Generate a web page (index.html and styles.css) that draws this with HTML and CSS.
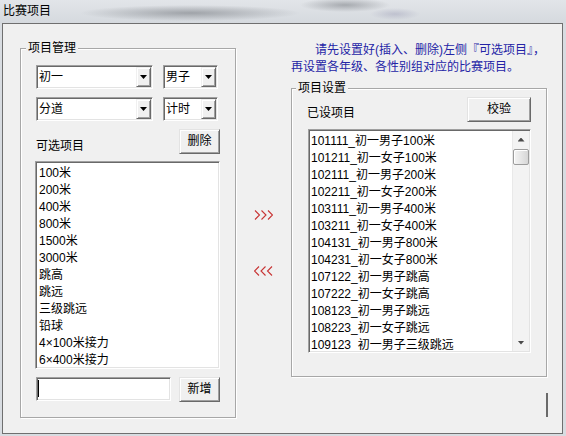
FILE: index.html
```html
<!DOCTYPE html>
<html>
<head>
<meta charset="utf-8">
<title>比赛项目</title>
<link rel="stylesheet" href="styles.css">
</head>
<body>
<div class="titlebar">比赛项目</div>
<div class="client">
  <div class="col-left">
    <div class="group group-left">
      <div class="group-title">项目管理</div>
      <div class="row row-combo row1">
        <div class="combo combo-wide"><span class="combo-text">初一</span><span class="combo-btn"><i class="tri"></i></span></div>
        <div class="combo combo-narrow"><span class="combo-text">男子</span><span class="combo-btn"><i class="tri"></i></span></div>
      </div>
      <div class="row row-combo row2">
        <div class="combo combo-wide"><span class="combo-text">分道</span><span class="combo-btn"><i class="tri"></i></span></div>
        <div class="combo combo-narrow"><span class="combo-text">计时</span><span class="combo-btn"><i class="tri"></i></span></div>
      </div>
      <div class="row row-label">
        <span class="label">可选项目</span>
        <button class="btn btn-small">删除</button>
      </div>
      <div class="listbox listbox-left">
        <div class="item">100米</div>
        <div class="item">200米</div>
        <div class="item">400米</div>
        <div class="item">800米</div>
        <div class="item">1500米</div>
        <div class="item">3000米</div>
        <div class="item">跳高</div>
        <div class="item">跳远</div>
        <div class="item">三级跳远</div>
        <div class="item">铅球</div>
        <div class="item">4×100米接力</div>
        <div class="item">6×400米接力</div>
      </div>
      <div class="row row-input">
        <div class="textbox"><span class="caret"></span></div>
        <button class="btn btn-small">新增</button>
      </div>
    </div>
  </div>

  <div class="col-mid">
    <svg class="arrows arrows-right" width="19" height="10" viewBox="0 0 19 10">
      <polyline points="1,0.5 5.5,5 1,9.5"/>
      <polyline points="7.5,0.5 12,5 7.5,9.5"/>
      <polyline points="14,0.5 18.5,5 14,9.5"/>
    </svg>
    <svg class="arrows arrows-left" width="19" height="10" viewBox="0 0 19 10">
      <polyline points="5,0.5 0.5,5 5,9.5"/>
      <polyline points="11.5,0.5 7,5 11.5,9.5"/>
      <polyline points="18,0.5 13.5,5 18,9.5"/>
    </svg>
  </div>

  <div class="col-right">
    <div class="note">
      <div class="note-line note-first">请先设置好(插入、删除)左侧『可选项目』，</div>
      <div class="note-line">再设置各年级、各性别组对应的比赛项目。</div>
    </div>
    <div class="group group-right">
      <div class="group-title group-title-right">项目设置</div>
      <div class="row row-label row-label-right">
        <span class="label label-right">已设项目</span>
        <button class="btn btn-wide">校验</button>
      </div>
      <div class="listbox listbox-right">
        <div class="items">
          <div class="item">101111_初一男子100米</div>
          <div class="item">101211_初一女子100米</div>
          <div class="item">102111_初一男子200米</div>
          <div class="item">102211_初一女子200米</div>
          <div class="item">103111_初一男子400米</div>
          <div class="item">103211_初一女子400米</div>
          <div class="item">104131_初一男子800米</div>
          <div class="item">104231_初一女子800米</div>
          <div class="item">107122_初一男子跳高</div>
          <div class="item">107222_初一女子跳高</div>
          <div class="item">108123_初一男子跳远</div>
          <div class="item">108223_初一女子跳远</div>
          <div class="item">109123_初一男子三级跳远</div>
        </div>
        <div class="scrollbar">
          <div class="sb-btn"><i class="sb-tri sb-up"></i></div>
          <div class="sb-thumb"></div>
          <div class="sb-track"></div>
          <div class="sb-btn"><i class="sb-tri sb-down"></i></div>
        </div>
      </div>
    </div>
    <div class="grip"></div>
  </div>
</div>
</body>
</html>
```

FILE: styles.css
```css
* {
  box-sizing: border-box;
}

html, body {
  margin: 0;
  padding: 0;
}

body {
  width: 566px;
  height: 436px;
  overflow: hidden;
  background: #d8dce1;
  font-family: "Liberation Sans", "Noto Sans CJK SC", sans-serif;
  font-size: 12px;
  color: #000;
}

.titlebar {
  height: 23px;
  line-height: 22px;
  padding-left: 3px;
  background:
    radial-gradient(ellipse 110px 8px at 190px 13px, rgba(110, 114, 120, 0.55), rgba(110, 114, 120, 0)),
    radial-gradient(ellipse 45px 7px at 345px 5px, rgba(110, 114, 120, 0.5), rgba(110, 114, 120, 0)),
    radial-gradient(ellipse 25px 6px at 395px 14px, rgba(140, 140, 170, 0.35), rgba(140, 140, 170, 0)),
    linear-gradient(#e2e5e9, #d5d9de);
}

.client {
  margin-left: 2px;
  width: 561px;
  height: 411px;
  border: 1px solid #6f6f6f;
  background: #f0f0f0;
  display: flex;
}

/* ---------- group boxes ---------- */
.group {
  border: 1px solid #a7a7a7;
  box-shadow: inset 1px 1px 0 #fff, 1px 1px 0 #fff;
}

.group-title {
  width: max-content;
  height: 14px;
  line-height: 14px;
  margin: -8px 0 0 5px;
  padding: 0 2px;
  background: #f0f0f0;
}

.group-title-right {
  margin-left: 4px;
}

.col-left {
  margin-left: 17px;
  margin-top: 24px;
}

.group-left {
  width: 216px;
  height: 370px;
}

.row {
  display: flex;
}

.row-combo {
  padding-left: 15px;
  gap: 10px;
  height: 24px;
}

.row1 {
  margin-top: 10px;
}

.row2 {
  margin-top: 8px;
}

/* ---------- combo boxes ---------- */
.combo {
  height: 24px;
  display: flex;
  padding: 1px;
  background: #fff;
  border: 1px solid;
  border-color: #a0a0a0 #fff #fff #a0a0a0;
  box-shadow: inset 1px 1px 0 #696969, inset -1px -1px 0 #e3e3e3;
}

.combo-wide {
  width: 117px;
}

.combo-narrow {
  width: 55px;
}

.combo-text {
  flex: 1;
  padding-left: 1px;
  line-height: 20px;
}

.combo-btn {
  width: 15px;
  display: flex;
  align-items: center;
  justify-content: center;
  background: #f0f0f0;
  border: 1px solid;
  border-color: #f0f0f0 #696969 #696969 #f0f0f0;
  box-shadow: inset 1px 1px 0 #fff, inset -1px -1px 0 #a0a0a0;
}

.tri {
  display: block;
  width: 7px;
  height: 4px;
  background: #000;
  clip-path: polygon(0 0, 100% 0, 50% 100%);
}

/* ---------- buttons ---------- */
.btn {
  font: inherit;
  color: #000;
  height: 25px;
  padding: 0;
  background: #f0f0f0;
  border: 1px solid;
  border-color: #e3e3e3 #696969 #696969 #e3e3e3;
  box-shadow: inset 1px 1px 0 #fff, inset -1px -1px 0 #a0a0a0;
  line-height: 21px;
}

.btn-small {
  width: 41px;
}

.btn-wide {
  width: 64px;
}

.row-label {
  margin-top: 8px;
  height: 25px;
  padding: 0 15px;
  justify-content: space-between;
  align-items: flex-end;
}

.label {
  line-height: 14px;
  margin-bottom: 1px;
}

/* ---------- list boxes ---------- */
.listbox {
  background: #fff;
  border: 1px solid;
  border-color: #a0a0a0 #fff #fff #a0a0a0;
  box-shadow: inset 1px 1px 0 #696969, inset -1px -1px 0 #e3e3e3;
  overflow: hidden;
}

.listbox-left {
  margin: 7px 0 0 14px;
  width: 185px;
  height: 208px;
  padding: 3px 2px 0 3px;
}

.item {
  line-height: 17px;
  height: 17px;
  white-space: nowrap;
}

.row-input {
  margin-top: 8px;
  padding-left: 15px;
  gap: 8px;
}

.textbox {
  width: 135px;
  height: 24px;
  padding: 2px 0 0 1px;
  background: #fff;
  border: 1px solid;
  border-color: #a0a0a0 #fff #fff #a0a0a0;
  box-shadow: inset 1px 1px 0 #696969, inset -1px -1px 0 #e3e3e3;
}

.caret {
  display: block;
  width: 1px;
  height: 17px;
  background: #000;
}

/* ---------- middle arrows ---------- */
.col-mid {
  width: 55px;
  display: flex;
  flex-direction: column;
  align-items: center;
}

.arrows {
  display: block;
  fill: none;
  stroke: #c83434;
  stroke-width: 1.1;
}

.arrows-right {
  margin-top: 186px;
}

.arrows-left {
  margin-top: 46px;
}

/* ---------- right column ---------- */
.col-right {
  width: 270px;
  margin-top: 18px;
}

.note {
  color: #2424a6;
  line-height: 17px;
}

.note-line {
  white-space: nowrap;
}

.note-first {
  padding-left: 24px;
}

.group-right {
  margin-top: 12px;
  width: 256px;
  height: 289px;
}

.row-label-right {
  margin-top: 2px;
}

.label-right {
  margin-bottom: 2px;
}

.listbox-right {
  margin: 7px 0 0 16px;
  width: 223px;
  height: 224px;
  padding: 1px;
  display: flex;
}

.items {
  flex: 1;
  padding: 2px 0 0 1px;
  overflow: hidden;
}

.scrollbar {
  width: 17px;
  display: flex;
  flex-direction: column;
  background: #f3f3f3;
  border-left: 1px solid #e9e9e9;
}

.sb-btn {
  height: 17px;
  display: flex;
  align-items: center;
  justify-content: center;
}

.sb-tri {
  display: block;
  width: 7px;
  height: 4px;
  background: #4a4a4a;
}

.sb-up {
  clip-path: polygon(50% 0, 100% 100%, 0 100%);
}

.sb-down {
  clip-path: polygon(0 0, 100% 0, 50% 100%);
}

.sb-thumb {
  margin: 1px 0 0 0;
  height: 16px;
  border: 1px solid #9c9c9c;
  border-radius: 2px;
  background: linear-gradient(to right, #f4f4f4, #e6e6e6 50%, #d6d6d6);
  box-shadow: inset 1px 1px 0 #fff;
}

.sb-track {
  flex: 1;
}

.grip {
  margin: 16px 0 0 255px;
  width: 2px;
  height: 24px;
  background: #6a6a6a;
}
```
